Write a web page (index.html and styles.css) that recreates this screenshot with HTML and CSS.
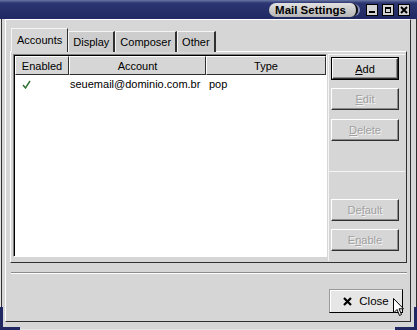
FILE: index.html
```html
<!DOCTYPE html>
<html lang="en">
<head>
    <meta charset="UTF-8">
    <title>Mail Settings</title>
    <link rel="stylesheet" href="styles.css">
</head>
<body>

    <div class="window">
        <div class="titlebar">
            <div class="title">Mail Settings</div>
            <div class="wbtns">
                <span class="wbtn"><svg width="10" height="10" viewBox="0 0 10 10"><rect x="2" y="6" width="6" height="2" fill="#000"/></svg></span>
                <span class="wbtn"><svg width="10" height="10" viewBox="0 0 10 10"><rect x="2.5" y="2.5" width="5" height="5" fill="none" stroke="#000" stroke-width="1"/><rect x="2" y="2" width="6" height="2" fill="#000"/></svg></span>
                <span class="wbtn"><svg width="10" height="10" viewBox="0 0 10 10"><path d="M2 2 L8 8 M8 2 L2 8" stroke="#000" stroke-width="2"/></svg></span>
            </div>
        </div>

        <div class="client">
            <div class="tabs">
                <div class="tab active">Accounts</div>
                <div class="tab">Display</div>
                <div class="tab">Composer</div>
                <div class="tab">Other</div>
            </div>

            <div class="panel">
                <div class="list">
                    <div class="list-head">
                        <div class="hcell c1">Enabled</div>
                        <div class="hcell c2">Account</div>
                        <div class="hcell c3">Type</div>
                    </div>
                    <div class="row">
                        <div class="cell c1">
                            <svg width="9" height="9" viewBox="0 0 9 9"><path d="M1 5 L3.5 8 L8 1" fill="none" stroke="#2e6e2e" stroke-width="1.4"/></svg>
                        </div>
                        <div class="cell c2">seuemail@dominio.com.br</div>
                        <div class="cell c3">pop</div>
                    </div>
                </div>

                <div class="side">
                    <div class="group">
                        <button class="btn default"><u>A</u>dd</button>
                        <button class="btn" disabled><u>E</u>dit</button>
                        <button class="btn" disabled><u>D</u>elete</button>
                    </div>
                    <div class="group lower">
                        <button class="btn" disabled>De<u>f</u>ault</button>
                        <button class="btn" disabled>E<u>n</u>able</button>
                    </div>
                </div>
            </div>

            <div class="sep"></div>

            <div class="footer">
                <button class="btn close">
                    <svg width="9" height="9" viewBox="0 0 9 9"><path d="M1 1 L8 8 M8 1 L1 8" stroke="#000" stroke-width="2.2"/></svg>
                    Close
                </button>
            </div>
        </div>

        <div class="corner bl"></div>
        <div class="corner br"></div>

        <svg class="cursor" width="12" height="19" viewBox="0 0 12 19"><path d="M0.5 0.5 L0.5 15 L4 11.5 L6.5 17.5 L8.5 16.5 L6 10.8 L10.5 10.8 Z" fill="#fff" stroke="#000" stroke-width="1"/></svg>
    </div>

</body>
</html>
```

FILE: styles.css
```css
body { margin: 0; font-family: "Liberation Sans", Arial, sans-serif; font-size: 11px; color: #000; background: #d6d6d6; }
.window { position: relative; width: 417px; height: 330px; box-sizing: border-box; background: #d6d6d6; display: flex; flex-direction: column; box-shadow: inset 1px 0 0 #e4e4e4, inset 2px 0 0 #303030, inset -1px 0 0 #303030, inset 0 -1px 0 #e4e4e4, inset 0 -2px 0 #d6d6d6; overflow: hidden; }

.titlebar { height: 19px; flex: none; display: flex; align-items: center; justify-content: flex-end; padding-right: 7px; background: linear-gradient(#6a76a4 0, #2c3672 3px, #1f2862 100%); }
.title { height: 14px; line-height: 14px; margin-right: 8px; padding: 0 10px 0 6px; font-weight: bold; font-size: 11.5px; color: #000; background: linear-gradient(#e2e2e2, #b4b4b4); border-radius: 8px; border-right: 2px solid #101010; box-shadow: 3px 0 0 -1px #8890b8; }
.wbtns { display: flex; gap: 4px; }
.wbtn { width: 10px; height: 10px; border: 1px solid #000; background: #d4d4d4; display: flex; }

.client { flex: 1; margin: 0 6px 8px 5px; border-top: 1px solid #fff; border-left: 1px solid #fff; border-right: 1px solid #303030; border-bottom: 1px solid #303030; padding: 9px 3px 0 4px; display: flex; flex-direction: column; }

.tabs { display: flex; align-items: flex-end; height: 23px; margin-left: 1px; margin-bottom: -1px; position: relative; z-index: 1; }
.tab { height: 20px; line-height: 20px; padding: 0 4px; background: #cdcdcd; border-top: 1px solid #f4f4f4; border-left: 1px solid #f4f4f4; border-right: 2px solid #303030; }
.tab.active { height: 23px; line-height: 22px; padding: 0 5px; background: #d6d6d6; border-right: 1px solid #303030; }

.panel { display: flex; height: 207px; padding: 2px 1px 1px 2px; border-top: 1px solid #fff; border-left: 1px solid #fff; border-right: 1px solid #303030; border-bottom: 1px solid #303030; }

.list { width: 311px; height: 200px; background: #fff; border: 1px solid #808080; border-right-color: #fff; border-bottom-color: #fff; box-shadow: inset 1px 1px 0 #000; padding: 1px 0 0 1px; }
.list-head { display: flex; height: 19px; }
.hcell { box-sizing: border-box; height: 19px; line-height: 18px; text-align: center; background: #d6d6d6; border-top: 1px solid #fff; border-left: 1px solid #fff; border-right: 1px solid #303030; border-bottom: 1px solid #303030; }
.c1 { width: 54px; }
.c2 { width: 137px; }
.c3 { width: 120px; }
.row { display: flex; height: 17px; line-height: 17px; margin-top: 1px; }
.cell { box-sizing: border-box; padding-left: 3px; }
.row .c1 { padding-left: 7px; display: flex; align-items: center; }
.row .c2 { padding-left: 1px; }

.side { flex: 1; display: flex; flex-direction: column; margin-left: 1px; }
.group { display: flex; flex-direction: column; gap: 9px; height: 117px; box-sizing: border-box; padding: 2px 0 0 2px; border-left: 1px solid #f4f4f4; border-top: 1px solid #f4f4f4; }
.group.lower { flex: 1; justify-content: flex-end; padding-bottom: 10px; gap: 8px; }

.btn { width: 68px; height: 22px; padding: 0; font-family: inherit; font-size: 11px; color: #000; background: #d6d6d6; border: 1px solid; border-color: #fff #303030 #303030 #fff; box-shadow: inset -1px -1px 0 #8c8c8c; }
.btn.default { outline: 1px solid #000; width: 66px; margin: 1px 0 0 1px; height: 21px; }
.btn:disabled { color: #a0a0a0; text-shadow: 1px 1px 0 #f4f4f4; }

.sep { height: 1px; background: #8c8c8c; border-bottom: 1px solid #fff; margin: 9px 0 0 1px; }

.footer { display: flex; justify-content: flex-end; padding: 15px 4px 0 0; }
.btn.close { width: 74px; height: 24px; background: #e6e6e6; display: flex; align-items: center; justify-content: center; gap: 7px; font-size: 11.5px; border-color: #9a9a9a #000 #000 #9a9a9a; box-shadow: inset 1px 1px 0 #fff; }

.corner { position: absolute; background: #1f2862; }
.corner.bl { left: 0; bottom: 0; width: 20px; height: 3px; }
.corner.br { right: 0; bottom: 0; width: 22px; height: 3px; }
.corner.bl::after, .corner.br::after { content: ""; position: absolute; bottom: 0; width: 3px; height: 23px; background: #1f2862; }
.corner.bl::after { left: 0; }
.corner.br::after { right: 0; }

.cursor { position: absolute; left: 393px; top: 298px; }
```
